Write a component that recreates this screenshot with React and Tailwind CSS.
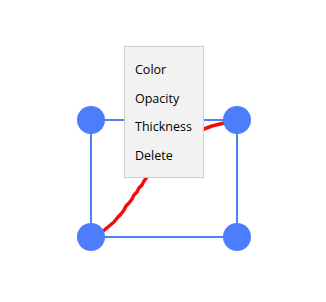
const menuItems = ['Color', 'Opacity', 'Thickness', 'Delete'];

const nodes = [
  [91, 120],
  [237, 120],
  [91, 237],
  [237, 237],
];

export default function App() {
  return (
    <div className="relative w-[326px] h-[302px] bg-white overflow-hidden">
      {/* canvas: rectangle with freehand stroke */}
      <svg className="absolute left-0 top-0" width="326" height="302" viewBox="0 0 326 302">
        <g stroke="#4f80f8" strokeWidth="2" fill="none">
          <line x1="91" y1="120" x2="237" y2="120" />
          <line x1="91" y1="237" x2="237" y2="237" />
          <line x1="91" y1="120" x2="91" y2="237" />
          <line x1="237" y1="120" x2="237" y2="237" />
        </g>
        <path
          d="M102 232 L108 227 L114 222 L118 217 L121 214 L124 210 L126 206 L129 203 L132 199 L134 195 L137 192 L139 188 L142 185 L144 181 L147 177 L160 162 L180 146 L204 129 L212 126 L224 123"
          stroke="#f20d0d"
          strokeWidth="3.5"
          strokeLinejoin="round"
          strokeLinecap="round"
          fill="none"
        />
        {nodes.map(([x, y]) => (
          <circle key={`${x}-${y}`} cx={x} cy={y} r="14" fill="#4e7dfb" />
        ))}
      </svg>

      {/* context menu */}
      <div className="absolute left-[124px] top-[46px] w-[80px] h-[132px] bg-[#f2f2f2] border border-[#cccccc] pt-[9px] font-['Open_Sans',sans-serif] text-[12.5px] text-black">
        {menuItems.map((item) => (
          <div key={item} className="h-[28.7px] pl-[10px] flex items-center">
            {item}
          </div>
        ))}
      </div>
    </div>
  );
}
